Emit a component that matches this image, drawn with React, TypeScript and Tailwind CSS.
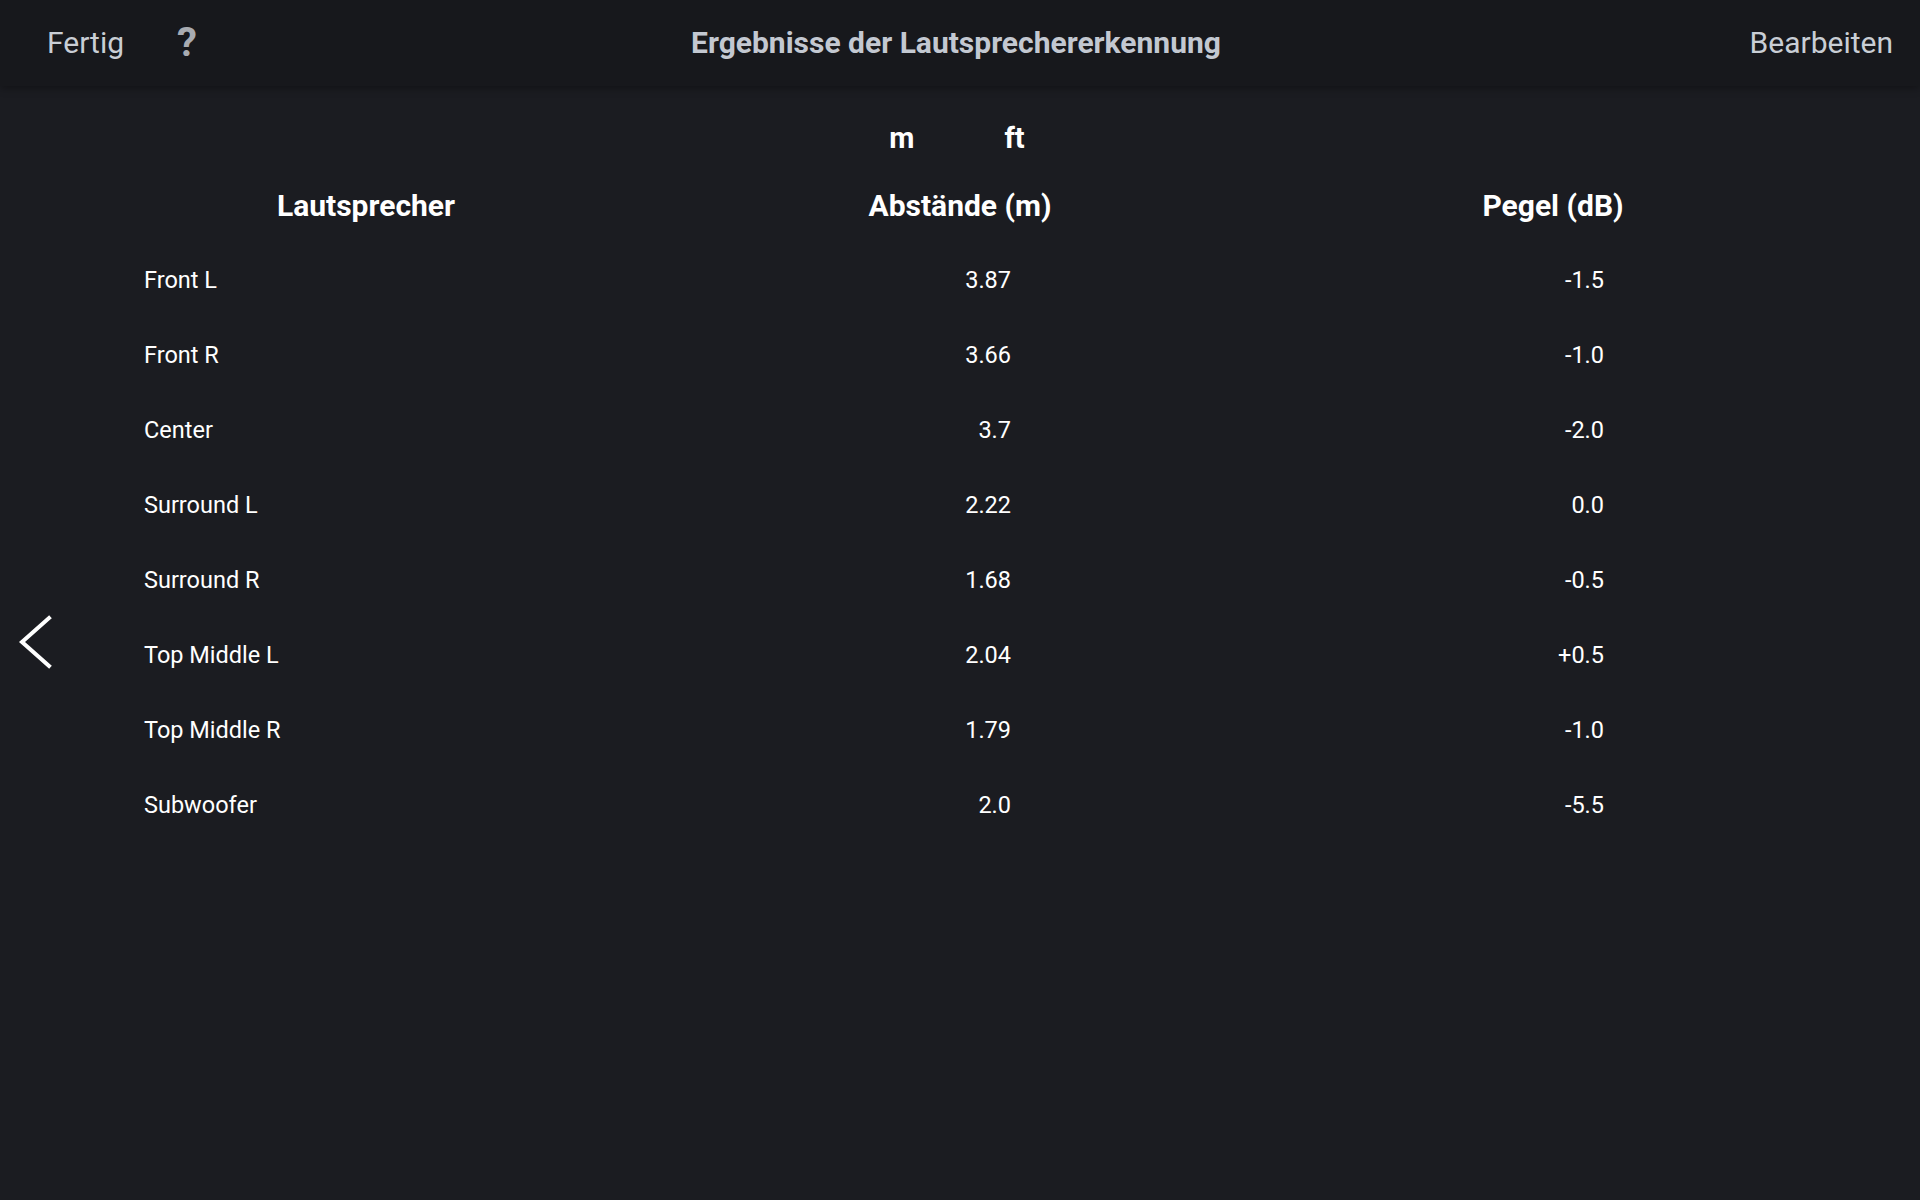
import React from "react";

const rows: [string, string, string][] = [
  ["Front L", "3.87", "-1.5"],
  ["Front R", "3.66", "-1.0"],
  ["Center", "3.7", "-2.0"],
  ["Surround L", "2.22", "0.0"],
  ["Surround R", "1.68", "-0.5"],
  ["Top Middle L", "2.04", "+0.5"],
  ["Top Middle R", "1.79", "-1.0"],
  ["Subwoofer", "2.0", "-5.5"],
];

export default function App() {
  return (
    <div
      className="relative w-[1920px] h-[1200px] bg-[#1b1c21] overflow-hidden text-white"
      style={{ fontFamily: "Roboto, 'Noto Sans', sans-serif" }}
    >
      {/* Header */}
      <div className="relative z-10 h-[86px] bg-[#17181c] grid grid-cols-[1fr_auto_1fr] items-center shadow-[0_2px_8px_rgba(0,0,0,0.35)]">
        <div className="flex items-center pl-[47px]">
          <span className="text-[30px] text-[#c9ced5] leading-none">Fertig</span>
          <span className="ml-[53px] text-[40px] font-bold text-[#a8abb1] leading-none">?</span>
        </div>
        <div className="mr-[8px] text-[30px] font-bold text-[#c3c8d1] leading-none">
          Ergebnisse der Lautsprechererkennung
        </div>
        <div className="flex justify-end pr-[27px]">
          <span className="text-[30px] text-[#c9ced5] leading-none">Bearbeiten</span>
        </div>
      </div>

      {/* Unit toggle */}
      <div className="h-[102px] pt-[2px] flex items-center justify-center gap-[90px] pr-[6px]">
        <span className="text-[29px] font-bold leading-none">m</span>
        <span className="text-[29px] font-bold leading-none">ft</span>
      </div>

      {/* Table */}
      <div className="pl-[144px]">
        <div className="grid grid-cols-[444px_744px_442px] h-[36px] items-center text-[30px] font-bold leading-none">
          <div className="text-center">Lautsprecher</div>
          <div className="text-center">Abstände (m)</div>
          <div className="text-center">Pegel (dB)</div>
        </div>
        <div className="pt-[19px]">
          {rows.map(([name, dist, level]) => (
            <div
              key={name}
              className="grid grid-cols-[444px_744px_442px] h-[75px] items-center text-[23.5px] leading-none"
            >
              <div>{name}</div>
              <div className="flex justify-center">
                <div className="w-[102px] text-right">{dist}</div>
              </div>
              <div className="flex justify-center">
                <div className="w-[102px] text-right">{level}</div>
              </div>
            </div>
          ))}
        </div>
      </div>

      {/* Back arrow */}
      <svg
        className="absolute left-[18px] top-[615px]"
        width="36"
        height="54"
        viewBox="0 0 36 54"
      >
        <polyline
          points="31,3 4,27 31,51"
          fill="none"
          stroke="#ffffff"
          strokeWidth="4"
          strokeLinecap="square"
          strokeLinejoin="miter"
        />
      </svg>
    </div>
  );
}
